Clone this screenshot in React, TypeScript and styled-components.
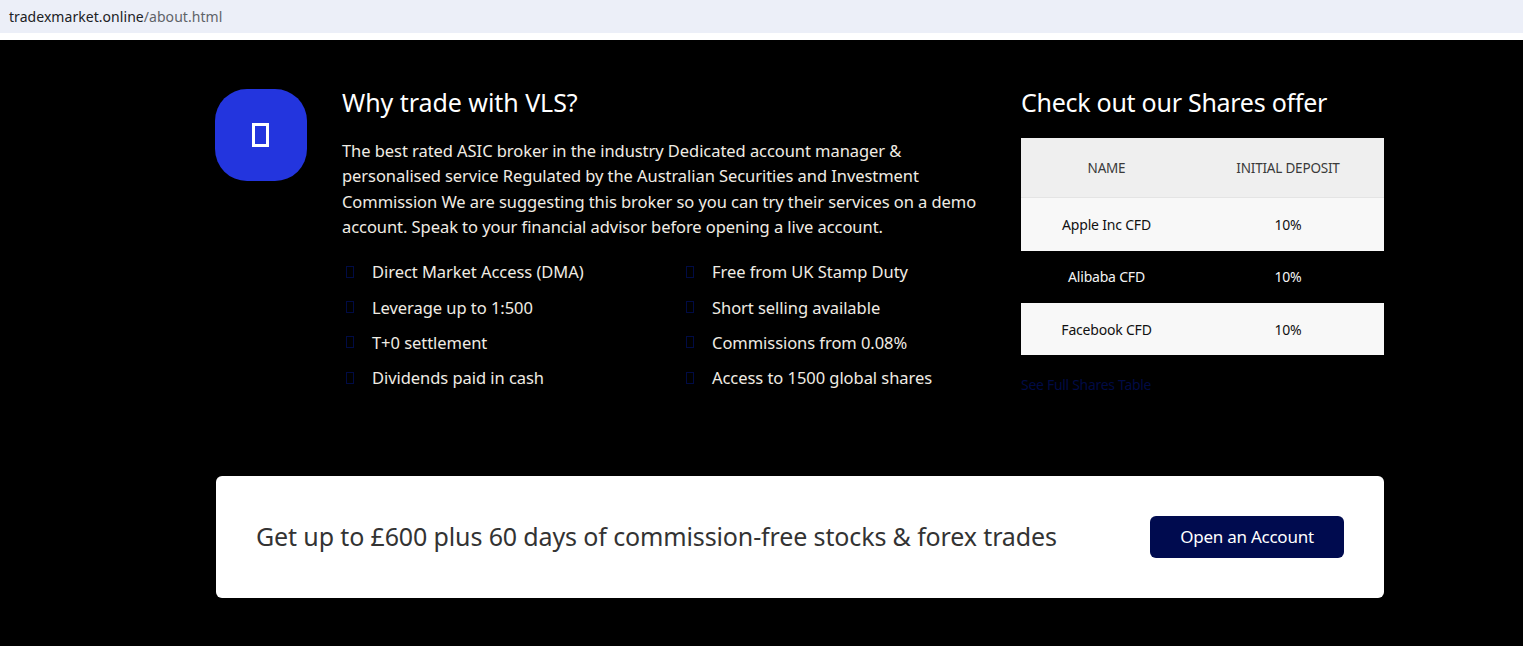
import React from "react";
import styled, { createGlobalStyle } from "styled-components";

const Global = createGlobalStyle`
  html, body { margin: 0; padding: 0; background: #fff; }
  body { font-family: "Noto Sans", "Open Sans", "Liberation Sans", sans-serif; }
`;
const Page = styled.div`
  width: 1523px; height: 646px; overflow: hidden; display: flex; flex-direction: column;
`;
const AddressBar = styled.div`
  height: 33px; background: #eceff8; padding-left: 9px; display: flex; align-items: center;
  font-size: 14px; letter-spacing: 0.05px; color: #5f6368; flex: none;
`;
const Host = styled.span` color: #202124; `;
const Gap = styled.div` height: 7px; background: #fff; flex: none; `;
const Dark = styled.main`
  flex: 1; background: #000; padding: 49px 139px 0 215px; display: flex; flex-direction: column;
`;
const Top = styled.section` display: flex; height: 387px; `;
const LogoBox = styled.div`
  width: 92px; height: 92px; border-radius: 32px; background: #2335de; flex: none;
  display: flex; align-items: center; justify-content: center;
`;
const Tofu = styled.span`
  display: block; width: 17px; height: 24px; margin-right: 1px; border: 3px solid #fff; box-sizing: border-box;
`;
const Middle = styled.div` width: 640px; margin-left: 35px; flex: none; `;
const Heading = styled.h2<{ $spacing: string }>`
  margin: -2px 0 0; font-size: 25px; line-height: 30px; font-weight: 400; color: #fff;
  letter-spacing: ${p => p.$spacing};
`;
const Lead = styled.p`
  margin: 21px 0 0; font-size: 16.5px; line-height: 25.3px; color: #f0ece4; letter-spacing: -0.06px; width: 640px;
`;
const Features = styled.ul`
  list-style: none; margin: 15px 0 0; padding: 0; display: grid; grid-template-columns: 340px 300px;
  grid-auto-rows: 35.3px;
`;
const Feature = styled.li`
  display: flex; align-items: center; gap: 18px; padding-left: 4px; font-size: 16.5px; color: #f0ece4;
  letter-spacing: -0.05px;
`;
const Bullet = styled.span`
  display: block; width: 8px; height: 12px; border: 1px solid #000b45; box-sizing: border-box; flex: none;
`;
const Side = styled.aside` width: 363px; margin-left: 39px; flex: none; `;
const Table = styled.table`
  width: 363px; margin-top: 21px; border-collapse: collapse; table-layout: fixed; font-size: 14px; letter-spacing: -0.2px;
`;
const Th = styled.th<{ $width: number }>`
  width: ${p => p.$width}px; height: 59px; padding: 0; background: #efefef; border-bottom: 1px solid #e4e4e4;
  font-weight: 400; font-size: 13.5px; color: #3a3a3a;
`;
const Row = styled.tr<{ $light: boolean }>`
  height: 52px; background: ${p => (p.$light ? "#f8f8f8" : "#000")}; color: ${p => (p.$light ? "#111" : "#f4f4f4")};
  &:first-child { height: 53px; }
  &:nth-child(3) td { padding-top: 1px; }
`;
const Td = styled.td` padding: 0; text-align: center; `;
const TableLink = styled.a`
  display: block; margin-top: 21px; font-size: 14px; line-height: 18px; color: #000b45; letter-spacing: -0.3px;
`;
const Banner = styled.section`
  margin-left: 1px; width: 1168px; height: 122px; box-sizing: border-box; background: #fff; border-radius: 6px;
  padding: 0 40px; display: flex; align-items: center; justify-content: space-between;
`;
const BannerText = styled.h3`
  margin: -2px 0 0; font-size: 25px; font-weight: 400; color: #333; letter-spacing: -0.13px;
`;
const Button = styled.a`
  width: 194px; height: 42px; box-sizing: border-box; padding-bottom: 2px; border-radius: 6px; background: #000b4f;
  color: #fff; font-size: 17px; letter-spacing: -0.25px; display: flex; align-items: center; justify-content: center;
`;

const features = ["Direct Market Access (DMA)", "Free from UK Stamp Duty", "Leverage up to 1:500", "Short selling available", "T+0 settlement", "Commissions from 0.08%", "Dividends paid in cash", "Access to 1500 global shares"];
const rows = [["Apple Inc CFD", "10%"], ["Alibaba CFD", "10%"], ["Facebook CFD", "10%"]];

export default function App() {
  return (
    <Page>
      <Global />
      <AddressBar><Host>tradexmarket.online</Host>/about.html</AddressBar>
      <Gap />
      <Dark>
        <Top>
          <LogoBox><Tofu /></LogoBox>
          <Middle>
            <Heading $spacing="-0.05px">Why trade with VLS?</Heading>
            <Lead>The best rated ASIC broker in the industry Dedicated account manager &amp; personalised service Regulated by the Australian Securities and Investment Commission We are suggesting this broker so you can try their services on a demo account. Speak to your financial advisor before opening a live account.</Lead>
            <Features>
              {features.map(t => <Feature key={t}><Bullet />{t}</Feature>)}
            </Features>
          </Middle>
          <Side>
            <Heading $spacing="-0.27px">Check out our Shares offer</Heading>
            <Table>
              <thead><tr><Th $width={171}>NAME</Th><Th $width={192}>INITIAL DEPOSIT</Th></tr></thead>
              <tbody>
                {rows.map((r, i) => (
                  <Row key={r[0]} $light={i % 2 === 0}><Td>{r[0]}</Td><Td>{r[1]}</Td></Row>
                ))}
              </tbody>
            </Table>
            <TableLink>See Full Shares Table</TableLink>
          </Side>
        </Top>
        <Banner>
          <BannerText>Get up to £600 plus 60 days of commission-free stocks &amp; forex trades</BannerText>
          <Button>Open an Account</Button>
        </Banner>
      </Dark>
    </Page>
  );
}
